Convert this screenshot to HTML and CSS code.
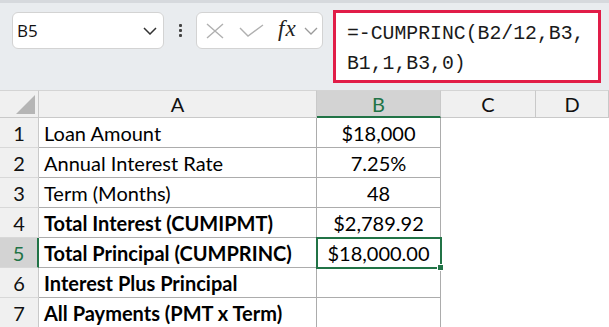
FILE: index.html
```html
<!DOCTYPE html>
<html>
<head>
    <meta charset="utf-8">
    <link rel="stylesheet" href="styles.css">
</head>
<body>
    <div class="toolbar">
        <div class="name-box">
            <span class="name-text">B5</span>
            <svg class="chevron" width="14" height="8" viewBox="0 0 14 8"><path d="M1 1 L7 7 L13 1" fill="none" stroke="#333" stroke-width="1.5"/></svg>
        </div>
        <div class="dots"><span></span><span></span><span></span></div>
        <div class="func-box">
            <svg width="18" height="16" viewBox="0 0 18 16"><path d="M1 1 L17 15 M17 1 L1 15" stroke="#b0b0b0" stroke-width="1.4" fill="none"/></svg>
            <svg width="25" height="13" viewBox="0 0 25 13"><path d="M1 4 L9 12 L24 1" stroke="#b0b0b0" stroke-width="1.4" fill="none"/></svg>
            <span class="fx">fx</span>
            <svg width="14" height="8" viewBox="0 0 14 8"><path d="M1 1 L7 7 L13 1" fill="none" stroke="#9a9a9a" stroke-width="1.3"/></svg>
        </div>
        <div class="formula-box">
            =-CUMPRINC(B2/12,B3,<br>B1,1,B3,0)
        </div>
    </div>

    <div class="sheet">
        <div class="hdr corner"><span class="tri"></span></div>
        <div class="hdr col">A</div>
        <div class="hdr col sel-col">B</div>
        <div class="hdr col">C</div>
        <div class="hdr col">D</div>

        <div class="hdr row">1</div>
        <div class="cell">Loan Amount</div>
        <div class="cell num">$18,000</div>
        <div class="empty"></div><div class="empty"></div>

        <div class="hdr row">2</div>
        <div class="cell">Annual Interest Rate</div>
        <div class="cell num">7.25%</div>
        <div class="empty"></div><div class="empty"></div>

        <div class="hdr row">3</div>
        <div class="cell">Term (Months)</div>
        <div class="cell num">48</div>
        <div class="empty"></div><div class="empty"></div>

        <div class="hdr row">4</div>
        <div class="cell bold">Total Interest (CUMIPMT)</div>
        <div class="cell num">$2,789.92</div>
        <div class="empty"></div><div class="empty"></div>

        <div class="hdr row sel-row">5</div>
        <div class="cell bold">Total Principal (CUMPRINC)</div>
        <div class="cell num active">$18,000.00<span class="handle"></span></div>
        <div class="empty"></div><div class="empty"></div>

        <div class="hdr row">6</div>
        <div class="cell bold">Interest Plus Principal</div>
        <div class="cell num"></div>
        <div class="empty"></div><div class="empty"></div>

        <div class="hdr row">7</div>
        <div class="cell bold">All Payments (PMT x Term)</div>
        <div class="cell num"></div>
        <div class="empty"></div><div class="empty"></div>
    </div>
</body>
</html>
```

FILE: styles.css
```css
* {
    box-sizing: border-box;
}

body {
    margin: 0;
    width: 609px;
    height: 327px;
    overflow: hidden;
    background: white;
    font-family: Lato, 'Liberation Sans', sans-serif;
    color: #000;
}

/* formula bar */
.toolbar {
    height: 90px;
    background: #e9ecef;
    border-top: 3px solid #d6d9dd;
    display: flex;
    align-items: flex-start;
    padding: 9px 8px 0 12px;
}

.name-box {
    width: 152px;
    height: 37px;
    background: white;
    border: 1px solid #d3d3d3;
    border-radius: 6px;
    display: flex;
    align-items: center;
    justify-content: space-between;
    padding: 0 6px 0 4px;
}

.name-text {
    font-family: 'Open Sans', sans-serif;
    font-size: 17px;
    color: #111;
}

.dots {
    width: 32px;
    height: 37px;
    display: flex;
    flex-direction: column;
    align-items: center;
    justify-content: center;
    gap: 2px;
}

.dots span {
    width: 3px;
    height: 3px;
    background: #444;
    border-radius: 1px;
}

.func-box {
    width: 127px;
    height: 37px;
    background: white;
    border: 1px solid #d3d3d3;
    border-radius: 6px;
    display: flex;
    align-items: center;
    padding: 0 4px 0 9px;
    gap: 14px;
}

.func-box svg:nth-child(2) {
    margin-left: 1px;
}

.func-box svg:last-child {
    margin-left: -7px;
}

.fx {
    font-family: 'Liberation Serif', serif;
    font-style: italic;
    font-size: 23px;
    color: #222;
    margin-top: -3px;
    letter-spacing: 1px;
}

.formula-box {
    width: 268px;
    height: 73px;
    margin-left: 10px;
    margin-top: -2px;
    background: white;
    border: 3px solid #e11d48;
    padding: 6px 0 0 11px;
    font-family: 'Liberation Mono', monospace;
    font-size: 19.8px;
    line-height: 30px;
    color: #1a1a1a;
}

/* grid */
.sheet {
    display: grid;
    grid-template-columns: 39px 278px 124px 95px 1fr;
    grid-template-rows: 28px repeat(7, 30px);
    font-size: 20px;
}

.hdr {
    background: #f0f0f0;
    border-right: 1px solid #c9c9c9;
    border-bottom: 1px solid #c9c9c9;
    display: flex;
    align-items: center;
    justify-content: center;
    color: #111;
    font-size: 20px;
}

.corner {
    position: relative;
    border-top: 1px solid #d4d4d4;
}

.col {
    border-top: 1px solid #d4d4d4;
}

.tri {
    position: absolute;
    right: 3px;
    bottom: 3px;
    width: 0;
    height: 0;
    border-left: 19px solid transparent;
    border-bottom: 19px solid #b5b5b5;
}

.sel-col {
    background: #d3d3d3;
    color: #217346;
    border-bottom: 2px solid #217346;
}

.row {
    border-bottom-color: #d8d8d8;
}

.sel-row {
    background: #d3d3d3;
    color: #217346;
    border-right: 2px solid #217346;
}

.cell {
    border-right: 1px solid #acacac;
    border-bottom: 1px solid #acacac;
    display: flex;
    align-items: center;
    padding: 0 5px;
    white-space: nowrap;
}

.bold {
    font-weight: bold;
}

.num {
    justify-content: center;
}

.active {
    position: relative;
    outline: 2px solid #217346;
    outline-offset: -1px;
}

.handle {
    position: absolute;
    right: -4px;
    bottom: -4px;
    width: 7px;
    height: 7px;
    background: #217346;
    border: 1px solid white;
}

.empty {
    background: white;
}
```
